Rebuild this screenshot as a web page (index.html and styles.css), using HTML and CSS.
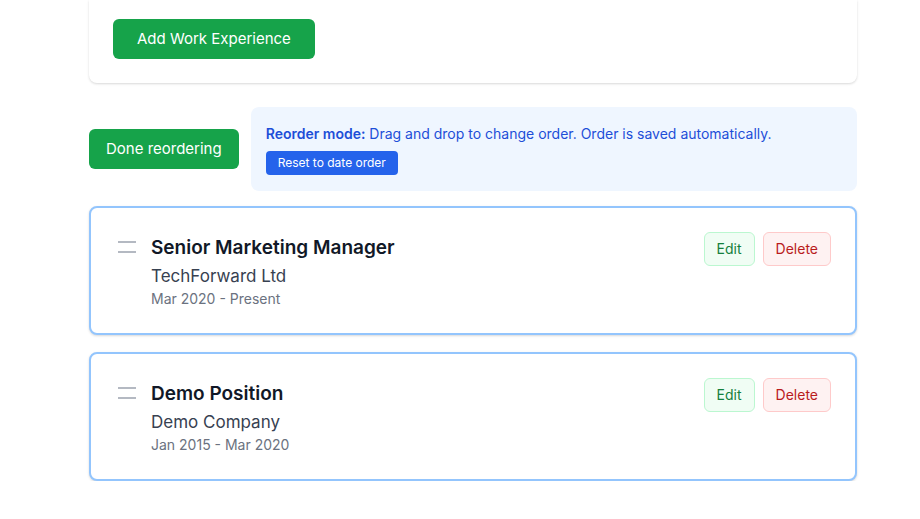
FILE: index.html
```html
<!DOCTYPE html>
<html>
<head>
    <meta name="viewport" content="width=device-width, initial-scale=1.0">
    <title>Work Experience</title>
    <link rel="stylesheet" href="styles.css">
</head>
<body>
<div class="page">
    <div class="panel">
        <button class="btn btn-green">Add Work Experience</button>
    </div>

    <div class="reorder-row">
        <button class="btn btn-green">Done reordering</button>
        <div class="notice">
            <p><strong>Reorder mode:</strong> Drag and drop to change order. Order is saved automatically.</p>
            <button class="btn-small">Reset to date order</button>
        </div>
    </div>

    <div class="list">
        <div class="item">
            <svg class="handle" width="24" height="24" viewBox="0 0 24 24" fill="none" stroke="#9ca3af" stroke-width="1.6">
                <path d="M3 7h18M3 17h18"/>
            </svg>
            <div class="info">
                <h3>Senior Marketing Manager</h3>
                <div class="company">TechForward Ltd</div>
                <div class="dates">Mar 2020 - Present</div>
            </div>
            <div class="actions">
                <button class="btn-edit">Edit</button>
                <button class="btn-delete">Delete</button>
            </div>
        </div>

        <div class="item">
            <svg class="handle" width="24" height="24" viewBox="0 0 24 24" fill="none" stroke="#9ca3af" stroke-width="1.6">
                <path d="M3 7h18M3 17h18"/>
            </svg>
            <div class="info">
                <h3>Demo Position</h3>
                <div class="company">Demo Company</div>
                <div class="dates">Jan 2015 - Mar 2020</div>
            </div>
            <div class="actions">
                <button class="btn-edit">Edit</button>
                <button class="btn-delete">Delete</button>
            </div>
        </div>
    </div>
</div>
</body>
</html>
```

FILE: styles.css
```css
* {
    margin: 0;
    padding: 0;
    box-sizing: border-box;
    font-family: 'Inter', 'Noto Sans', sans-serif;
}
body {
    background: #fff;
}
.page {
    width: 768px;
    margin-left: 89px;
}
.panel {
    background: #fff;
    padding: 19px 24px 24px;
    border-radius: 0 0 8px 8px;
    box-shadow: 0 1px 3px rgba(0, 0, 0, 0.1), 0 1px 2px rgba(0, 0, 0, 0.06);
}
.btn {
    border: 0;
    cursor: pointer;
    font-size: 15px;
    line-height: 24px;
    padding: 8px 24px;
    border-radius: 6px;
    color: #fff;
}
.btn-green {
    background: #16a34a;
}
.reorder-row {
    display: flex;
    align-items: center;
    gap: 12px;
    margin-top: 24px;
}
.reorder-row .btn {
    padding: 8px 17px;
}
.notice {
    flex: 1;
    background: #eff6ff;
    border-radius: 8px;
    padding: 17px 15px 16px;
    color: #1d4ed8;
    font-size: 14px;
    line-height: 20px;
}
.notice strong {
    font-weight: 600;
}
.btn-small {
    margin-top: 7px;
    border: 0;
    background: #2563eb;
    color: #fff;
    font-size: 12px;
    line-height: 16px;
    padding: 4px 12px;
    border-radius: 4px;
    cursor: pointer;
}
.list {
    display: flex;
    flex-direction: column;
    gap: 17px;
    margin-top: 15px;
}
.item {
    display: flex;
    align-items: flex-start;
    gap: 12px;
    border: 2px solid #93c5fd;
    border-radius: 8px;
    padding: 24px;
    background: #fff;
    box-shadow: 0 1px 3px rgba(0, 0, 0, 0.1), 0 1px 2px rgba(0, 0, 0, 0.06);
}
.handle {
    margin-top: 3px;
    flex-shrink: 0;
}
.info {
    flex: 1;
    margin-top: 2px;
}
.info h3 {
    font-size: 19px;
    line-height: 28px;
    font-weight: 600;
    color: #111827;
}
.company {
    font-size: 17px;
    line-height: 24px;
    color: #374151;
    margin-top: 2px;
}
.dates {
    font-size: 14px;
    line-height: 20px;
    color: #6b7280;
    margin-top: 1px;
}
.actions {
    display: flex;
    gap: 8px;
}
.actions button {
    font-size: 14px;
    line-height: 20px;
    padding: 6px 12px;
    border-radius: 6px;
    cursor: pointer;
}
.btn-edit {
    background: #f0fdf4;
    border: 1px solid #bbf7d0;
    color: #15803d;
}
.btn-delete {
    background: #fef2f2;
    border: 1px solid #fecaca;
    color: #b91c1c;
}
```
